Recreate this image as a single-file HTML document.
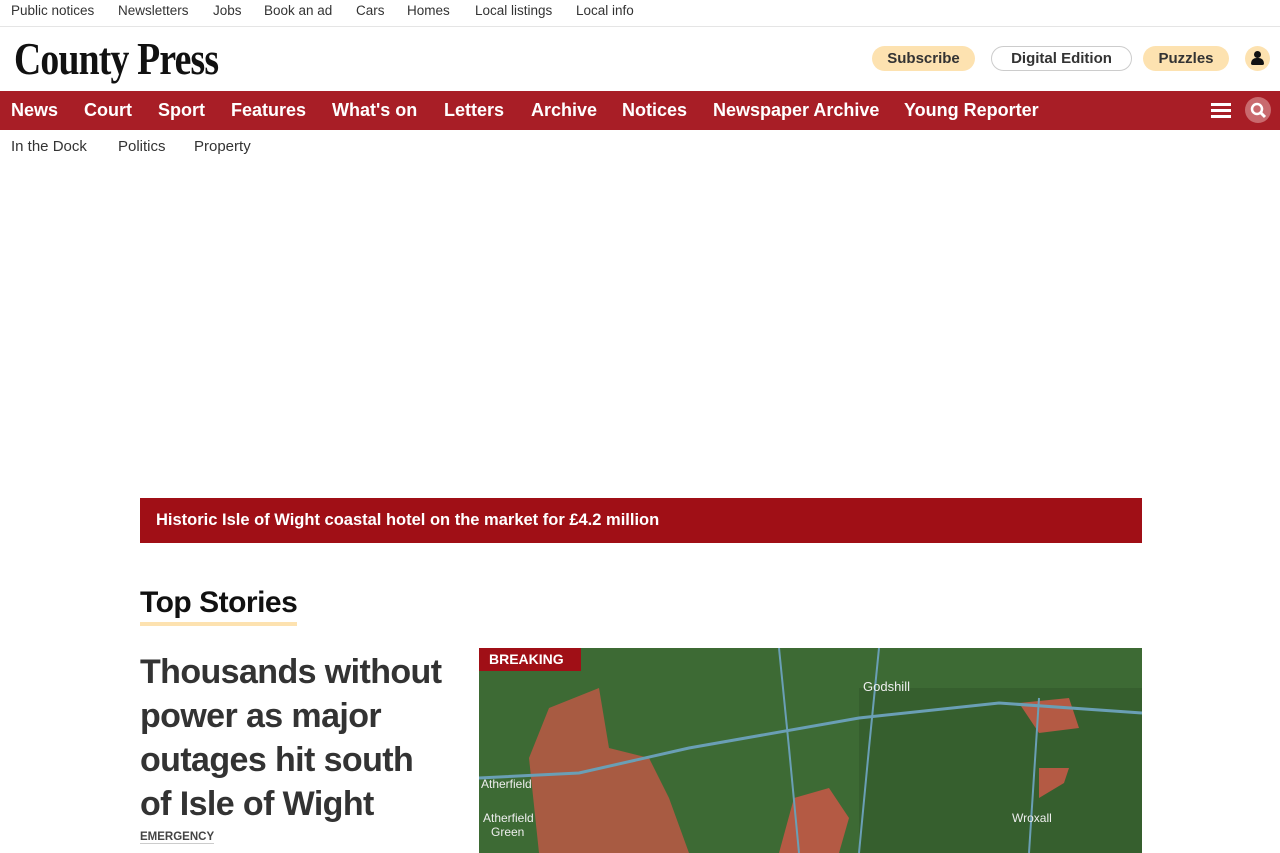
<!DOCTYPE html>
<html><head><meta charset="utf-8"><style>
*{margin:0;padding:0;box-sizing:border-box}
body{width:1280px;height:853px;overflow:hidden;background:#fff;font-family:"Liberation Sans",sans-serif;color:#333;position:relative}
.top{position:absolute;top:0;left:0;width:1280px;height:27px;border-bottom:1px solid #e5e5e5;font-size:13.5px}
.top span,.sub span,.nav span{position:absolute;white-space:nowrap}
.top span{top:3px}
.logo{position:absolute;left:14px;top:32px;font-family:"Liberation Serif",serif;font-weight:bold;font-size:46px;letter-spacing:-1px;color:#111;transform-origin:left top;transform:scaleX(0.82);white-space:nowrap}
.btn{position:absolute;top:46px;height:25px;border-radius:13px;font-weight:bold;font-size:15px;display:flex;align-items:center;justify-content:center;color:#333}
.nav{position:absolute;top:91px;left:0;width:1280px;height:39px;background:#a81e26;color:#fff;font-weight:bold;font-size:18px}
.nav span{top:9px}
.sub{position:absolute;top:138px;left:0;font-size:15px}
.bar{position:absolute;left:140px;top:498px;width:1002px;height:45px;background:#a00f16;color:#fff;font-weight:bold;font-size:16.5px;padding:13px 0 0 16px}
h2{position:absolute;left:140px;top:586px;font-size:30px;font-weight:bold;color:#111;border-bottom:4px solid #fde2b0;padding-bottom:2px;letter-spacing:-0.5px}
.head{position:absolute;left:140px;top:650px;width:330px;font-size:34px;line-height:44px;font-weight:bold;color:#333;letter-spacing:-0.6px;white-space:nowrap}
.tag{position:absolute;left:140px;top:831px;font-size:11.5px;font-weight:bold;color:#444;border-bottom:1px solid #ccc}
.map{position:absolute;left:479px;top:648px;width:663px;height:205px;background:#3d6a34;overflow:hidden}
</style></head><body>
<div class="top"><span style="left:11px">Public notices</span><span style="left:118px">Newsletters</span><span style="left:213px">Jobs</span><span style="left:264px">Book an ad</span><span style="left:356px">Cars</span><span style="left:407px">Homes</span><span style="left:475px">Local listings</span><span style="left:576px">Local info</span></div>
<div class="logo">County Press</div>
<div class="btn" style="left:872px;width:103px;background:#fde2b0">Subscribe</div>
<div class="btn" style="left:991px;width:141px;border:1px solid #ccc">Digital Edition</div>
<div class="btn" style="left:1143px;width:86px;background:#fde2b0">Puzzles</div>
<div style="position:absolute;left:1245px;top:46px;width:25px;height:25px;border-radius:50%;background:#fde2b0"><div style="position:absolute;left:9px;top:5px;width:7px;height:7px;border-radius:50%;background:#111"></div><div style="position:absolute;left:6px;top:12px;width:13px;height:7px;border-radius:6px 6px 2px 2px;background:#111"></div></div>
<div class="nav"><span style="left:11px">News</span><span style="left:84px">Court</span><span style="left:158px">Sport</span><span style="left:231px">Features</span><span style="left:332px">What's on</span><span style="left:444px">Letters</span><span style="left:531px">Archive</span><span style="left:622px">Notices</span><span style="left:713px">Newspaper Archive</span><span style="left:904px">Young Reporter</span>
<div style="position:absolute;left:1211px;top:12px;width:20px;height:3px;background:#fff;box-shadow:0 6px #fff,0 12px #fff"></div>
<div style="position:absolute;left:1245px;top:6px;width:26px;height:26px;border-radius:50%;background:#c96a6e"><svg width="26" height="26"><circle cx="12" cy="12" r="5" stroke="#fff" stroke-width="2.5" fill="none"/><path d="M16 16l4 4" stroke="#fff" stroke-width="3"/></svg></div></div>
<div class="sub"><span style="left:11px">In the Dock</span><span style="left:118px">Politics</span><span style="left:194px">Property</span></div>
<div class="bar">Historic Isle of Wight coastal hotel on the market for £4.2 million</div>
<h2>Top Stories</h2>
<div class="head">Thousands without<br>power as major<br>outages hit south<br>of Isle of Wight</div>
<div class="tag">EMERGENCY</div>
<div class="map"><svg width="663" height="205">
<rect x="380" y="40" width="283" height="165" fill="#365f2e"/>
<path d="M70 60 L120 40 L130 100 L170 110 L190 150 L210 205 L60 205 L50 110Z" fill="#b45a44" opacity=".9"/>
<path d="M315 150 L350 140 L370 170 L360 205 L300 205Z" fill="#b45a44"/>
<path d="M540 55 L590 50 L600 80 L560 85Z" fill="#b45a44"/>
<path d="M560 120 L590 120 L585 135 L560 150Z" fill="#b45a44"/>
<path d="M0 130 L100 125 L210 100 L380 70 L520 55 L663 65" stroke="#6a9fb5" stroke-width="3" fill="none"/>
<path d="M300 0 L310 100 L320 205 M400 0 L390 100 L380 205 M560 50 L550 205" stroke="#6a9fb5" stroke-width="2" fill="none"/>
<rect x="0" y="0" width="102" height="23" fill="#a00f16"/>
<text x="10" y="16" fill="#fff" font-weight="bold" font-size="14" font-family="Liberation Sans">BREAKING</text>
<text x="384" y="43" fill="#eee" font-size="13" font-family="Liberation Sans">Godshill</text>
<text x="2" y="140" fill="#eee" font-size="12" font-family="Liberation Sans">Atherfield</text>
<text x="4" y="174" fill="#eee" font-size="12" font-family="Liberation Sans">Atherfield</text>
<text x="12" y="188" fill="#eee" font-size="12" font-family="Liberation Sans">Green</text>
<text x="533" y="174" fill="#eee" font-size="12" font-family="Liberation Sans">Wroxall</text>
</svg></div>
</body></html>
